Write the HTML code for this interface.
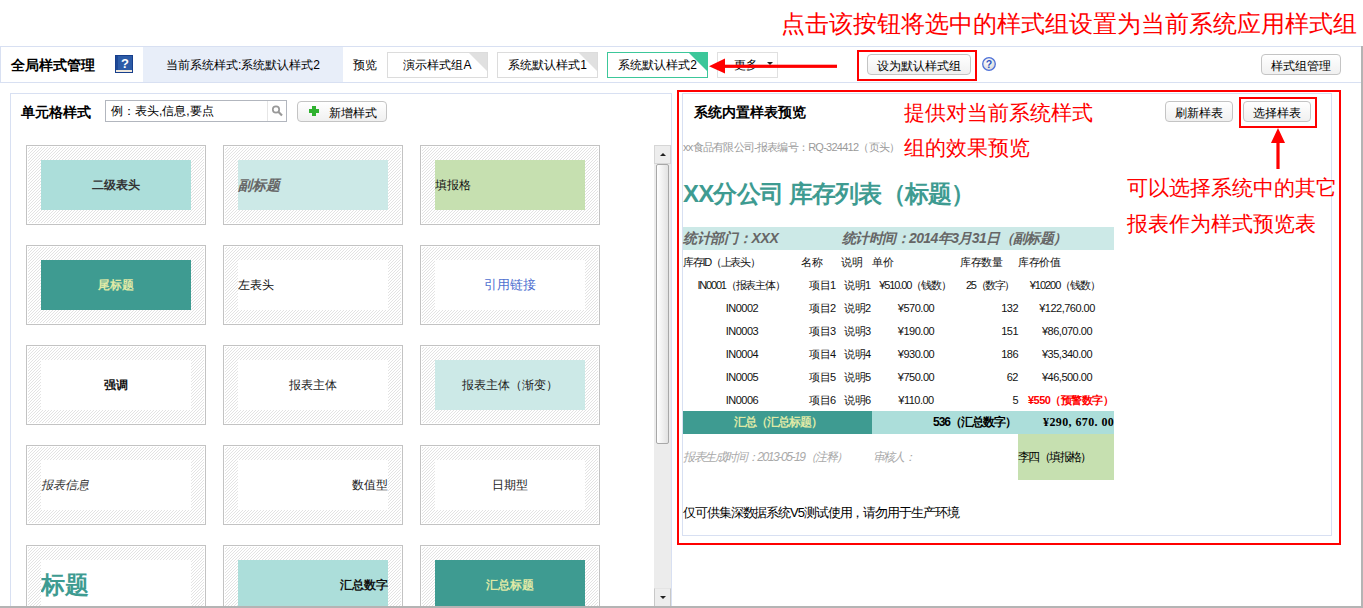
<!DOCTYPE html>
<html><head><meta charset="utf-8">
<style>
*{box-sizing:border-box;margin:0;padding:0}
html,body{width:1363px;height:608px;overflow:hidden;background:#fff}
body{position:relative;font-family:"Liberation Sans",sans-serif;font-size:12px;color:#000}
.a{position:absolute;white-space:nowrap}
.red{color:#ff0000}
.btn{position:absolute;border:1px solid #c4c4c4;border-radius:4px;background:linear-gradient(#ffffff,#f0f0f0);font-size:12px;text-align:center;white-space:nowrap}
.tab{position:absolute;top:52px;height:26px;border:1px solid #dcdcdc;background:#fff;font-size:12px;text-align:center;line-height:24px;white-space:nowrap;overflow:hidden}
.tab i{position:absolute;right:0;top:0;width:0;height:0;border-top:18px solid #e0e0e0;border-left:18px solid transparent}
.tile{position:absolute;width:180px;height:80px;border:1px solid #c3c3c3;}
.tin{width:150px;height:50px;line-height:50px;font-size:12px;overflow:hidden}
.td{font-size:11px;line-height:14px;letter-spacing:-0.5px;color:#111}
.in{position:absolute;left:14px;top:14px;width:150px;height:50px;line-height:50px;font-size:12px;white-space:nowrap;overflow:hidden}
</style></head>
<body>

<!-- top annotation -->
<div class="a red" style="left:781px;top:10px;font-size:24px;line-height:28px">点击该按钮将选中的样式组设置为当前系统应用样式组</div>

<!-- toolbar -->
<div class="a" style="left:0;top:46px;width:1362px;height:37px;border:1px solid #d8e0f2;border-right:none"></div>
<div class="a" style="left:143px;top:47px;width:200px;height:35px;background:#e8eef9"></div>
<div class="a" style="left:11px;top:57px;font-size:14px;font-weight:bold;line-height:16px">全局样式管理</div>
<svg class="a" style="left:115px;top:55px" width="18" height="18" viewBox="0 0 18 18" shape-rendering="crispEdges">
  <rect x="0" y="0" width="18" height="18" fill="#173f8c"/>
  <rect x="1" y="1" width="2" height="14" fill="#1d4896"/>
  <rect x="3" y="1" width="14" height="14" fill="#2c5ba7"/>
  <rect x="1" y="15" width="16" height="2" fill="#efe8dc"/>
  <text x="10" y="13" font-size="13" font-weight="bold" fill="#fff" text-anchor="middle" font-family="Liberation Sans" shape-rendering="auto">?</text>
</svg>
<div class="a" style="left:166px;top:58px;line-height:14px">当前系统样式:系统默认样式2</div>
<div class="a" style="left:353px;top:58px;line-height:14px">预览</div>
<div class="tab" style="left:387px;width:101px">演示样式组A<i></i></div>
<div class="tab" style="left:497px;width:101px">系统默认样式1<i></i></div>
<div class="tab" style="left:607px;width:101px;border-color:#3cc79a">系统默认样式2<i style="border-top-color:#3cc79a"></i></div>
<div class="tab" style="left:717px;width:61px;border-color:#e0e0e0;text-align:left;padding-left:16px">更多 <b style="position:absolute;left:49px;top:9px;width:0;height:0;border-left:3px solid transparent;border-right:3px solid transparent;border-top:3px solid #222"></b></div>
<!-- red arrow left -->
<svg class="a" style="left:705px;top:56px" width="135" height="20" viewBox="0 0 135 20">
  <rect x="14" y="8.7" width="118" height="3.2" fill="#ff0000"/>
  <polygon points="4,10.3 20,2.5 20,17.5" fill="#ff0000"/>
</svg>
<div class="a" style="left:857px;top:50px;width:120px;height:31px;border:2px solid #ff0000"></div>
<div class="btn" style="left:867px;top:54px;width:104px;height:21px;line-height:22px">设为默认样式组</div>
<svg class="a" style="left:982px;top:57px" width="14" height="14" viewBox="0 0 14 14">
  <defs><radialGradient id="cg" cx="0.4" cy="0.35" r="0.7"><stop offset="0" stop-color="#ffffff"/><stop offset="1" stop-color="#d6d6d6"/></radialGradient></defs>
  <circle cx="7" cy="7" r="6.3" fill="url(#cg)" stroke="#4d70d8" stroke-width="1.3"/>
  <text x="7" y="11" font-size="10.5" font-weight="bold" fill="#2f55c0" text-anchor="middle" font-family="Liberation Sans">?</text>
</svg>
<div class="btn" style="left:1261px;top:54px;width:80px;height:21px;line-height:22px">样式组管理</div>

<!-- window edges -->
<div class="a" style="left:1361px;top:46px;width:2px;height:562px;background:#b4b4b4;z-index:10"></div>
<div class="a" style="left:0;top:606px;width:1363px;height:2px;background:#b4b4b4;z-index:10"></div>

<!-- LEFT PANEL -->
<div class="a" style="left:10px;top:93px;width:662px;height:530px;border:1px solid #d8e0f2"></div>
<div class="a" style="left:21px;top:104px;font-size:14px;font-weight:bold;line-height:16px">单元格样式</div>
<div class="a" style="left:105px;top:100px;width:182px;height:22px;border:1px solid #b2b6be;background:#fff"></div>
<div class="a" style="left:267px;top:101px;width:1px;height:20px;background:#e6e6e6"></div>
<div class="a" style="left:111px;top:104px;line-height:14px">例：表头,信息,要点</div>
<svg class="a" style="left:271px;top:104px" width="14" height="14" viewBox="0 0 14 14">
  <circle cx="5" cy="5.5" r="3.2" fill="none" stroke="#999" stroke-width="1.7"/>
  <line x1="7.3" y1="7.8" x2="11" y2="11.5" stroke="#999" stroke-width="2.2"/>
</svg>
<div class="btn" style="left:297px;top:101px;width:90px;height:21px;line-height:22px;text-align:left;padding-left:31px">新增样式</div>
<svg class="a" style="left:309px;top:106px" width="10" height="10" viewBox="0 0 10 10">
  <path d="M3 0h4v3h3v4h-3v3h-4v-3h-3v-4h3z" fill="#2fb12f"/>
</svg>

<!-- TILES -->
<svg class="a" style="left:0;top:0" width="660" height="608" viewBox="0 0 660 608" shape-rendering="crispEdges">
<defs><pattern id="hp" width="3" height="3" patternUnits="userSpaceOnUse"><rect width="3" height="3" fill="#fff"/><rect x="0" y="2" width="1" height="1" fill="#e3e3e3"/><rect x="1" y="1" width="1" height="1" fill="#e3e3e3"/><rect x="2" y="0" width="1" height="1" fill="#e3e3e3"/></pattern></defs>
<rect x="26.5" y="145.5" width="179" height="79" fill="#fff" stroke="#c3c3c3"/>
<rect x="28" y="147" width="176" height="76" fill="url(#hp)"/>
<rect x="41" y="160" width="150" height="50" fill="#acdeda"/>
<rect x="223.5" y="145.5" width="179" height="79" fill="#fff" stroke="#c3c3c3"/>
<rect x="225" y="147" width="176" height="76" fill="url(#hp)"/>
<rect x="238" y="160" width="150" height="50" fill="#cce9e7"/>
<rect x="420.5" y="145.5" width="179" height="79" fill="#fff" stroke="#c3c3c3"/>
<rect x="422" y="147" width="176" height="76" fill="url(#hp)"/>
<rect x="435" y="160" width="150" height="50" fill="#c6e0b0"/>
<rect x="26.5" y="245.5" width="179" height="79" fill="#fff" stroke="#c3c3c3"/>
<rect x="28" y="247" width="176" height="76" fill="url(#hp)"/>
<rect x="41" y="260" width="150" height="50" fill="#3e9b91"/>
<rect x="223.5" y="245.5" width="179" height="79" fill="#fff" stroke="#c3c3c3"/>
<rect x="225" y="247" width="176" height="76" fill="url(#hp)"/>
<rect x="238" y="260" width="150" height="50" fill="#ffffff"/>
<rect x="420.5" y="245.5" width="179" height="79" fill="#fff" stroke="#c3c3c3"/>
<rect x="422" y="247" width="176" height="76" fill="url(#hp)"/>
<rect x="435" y="260" width="150" height="50" fill="#ffffff"/>
<rect x="26.5" y="345.5" width="179" height="79" fill="#fff" stroke="#c3c3c3"/>
<rect x="28" y="347" width="176" height="76" fill="url(#hp)"/>
<rect x="41" y="360" width="150" height="50" fill="#ffffff"/>
<rect x="223.5" y="345.5" width="179" height="79" fill="#fff" stroke="#c3c3c3"/>
<rect x="225" y="347" width="176" height="76" fill="url(#hp)"/>
<rect x="238" y="360" width="150" height="50" fill="#ffffff"/>
<rect x="420.5" y="345.5" width="179" height="79" fill="#fff" stroke="#c3c3c3"/>
<rect x="422" y="347" width="176" height="76" fill="url(#hp)"/>
<rect x="435" y="360" width="150" height="50" fill="#cce9e7"/>
<rect x="26.5" y="445.5" width="179" height="79" fill="#fff" stroke="#c3c3c3"/>
<rect x="28" y="447" width="176" height="76" fill="url(#hp)"/>
<rect x="41" y="460" width="150" height="50" fill="#ffffff"/>
<rect x="223.5" y="445.5" width="179" height="79" fill="#fff" stroke="#c3c3c3"/>
<rect x="225" y="447" width="176" height="76" fill="url(#hp)"/>
<rect x="238" y="460" width="150" height="50" fill="#ffffff"/>
<rect x="420.5" y="445.5" width="179" height="79" fill="#fff" stroke="#c3c3c3"/>
<rect x="422" y="447" width="176" height="76" fill="url(#hp)"/>
<rect x="435" y="460" width="150" height="50" fill="#ffffff"/>
<rect x="26.5" y="545.5" width="179" height="79" fill="#fff" stroke="#c3c3c3"/>
<rect x="28" y="547" width="176" height="76" fill="url(#hp)"/>
<rect x="41" y="560" width="150" height="50" fill="#ffffff"/>
<rect x="223.5" y="545.5" width="179" height="79" fill="#fff" stroke="#c3c3c3"/>
<rect x="225" y="547" width="176" height="76" fill="url(#hp)"/>
<rect x="238" y="560" width="150" height="50" fill="#acdeda"/>
<rect x="420.5" y="545.5" width="179" height="79" fill="#fff" stroke="#c3c3c3"/>
<rect x="422" y="547" width="176" height="76" fill="url(#hp)"/>
<rect x="435" y="560" width="150" height="50" fill="#3e9b91"/>
</svg>
<div class="a tin" style="left:41px;top:160px;font-weight:bold;text-align:center;color:#333">二级表头</div>
<div class="a tin" style="left:238px;top:160px;font-style:italic;font-weight:bold;font-size:14px;text-align:left;color:#666">副标题</div>
<div class="a tin" style="left:435px;top:160px;text-align:left;color:#111">填报格</div>
<div class="a tin" style="left:41px;top:260px;font-weight:bold;text-align:center;color:#dfe9a6">尾标题</div>
<div class="a tin" style="left:238px;top:260px;text-align:left;color:#111">左表头</div>
<div class="a tin" style="left:435px;top:260px;text-align:center;color:#4e6fcf;font-size:13px">引用链接</div>
<div class="a tin" style="left:41px;top:360px;font-weight:bold;text-align:center;color:#111">强调</div>
<div class="a tin" style="left:238px;top:360px;text-align:center;color:#222">报表主体</div>
<div class="a tin" style="left:435px;top:360px;text-align:center;color:#222">报表主体（渐变）</div>
<div class="a tin" style="left:41px;top:460px;font-style:italic;text-align:left;color:#333">报表信息</div>
<div class="a tin" style="left:238px;top:460px;text-align:right;color:#222">数值型</div>
<div class="a tin" style="left:435px;top:460px;text-align:center;color:#222">日期型</div>
<div class="a tin" style="left:41px;top:560px;font-weight:900;font-size:24px;text-align:left;color:#3e9b91">标题</div>
<div class="a tin" style="left:238px;top:560px;font-weight:bold;text-align:right;color:#111">汇总数字</div>
<div class="a tin" style="left:435px;top:560px;font-weight:bold;text-align:center;color:#dfe9a6">汇总标题</div>

<!-- scrollbar -->
<div class="a" style="left:654px;top:145px;width:17px;height:461px;background:#ececec"></div>
<div class="a" style="left:654px;top:145px;width:17px;height:19px;border:1px solid #d6d6d6;background:#ededed"></div>
<div class="a" style="left:660px;top:153px;width:0;height:0;border-left:3px solid transparent;border-right:3px solid transparent;border-bottom:3px solid #222"></div>
<div class="a" style="left:656px;top:164px;width:13px;height:280px;border:1px solid #a8a8a8;border-radius:2px;background:linear-gradient(90deg,#ffffff,#e2e2e2)"></div>
<div class="a" style="left:654px;top:588px;width:17px;height:18px;border:1px solid #c8c8c8;border-top-color:#e4e4e4;border-bottom:none;background:#ededed"></div>
<div class="a" style="left:660px;top:596px;width:0;height:0;border-left:3px solid transparent;border-right:3px solid transparent;border-top:3px solid #222"></div>

<!-- RIGHT PANEL -->
<div class="a" style="left:677px;top:90px;width:664px;height:455px;border:2px solid #ff0000"></div>
<div class="a" style="left:682px;top:93px;width:650px;height:443px;border:1px solid #d8e0f2"></div>


<div class="a" style="left:694px;top:104px;font-size:14px;font-weight:bold;line-height:16px">系统内置样表预览</div>
<div class="btn" style="left:1165px;top:101px;width:68px;height:21px;line-height:22px">刷新样表</div>
<div class="btn" style="left:1243px;top:101px;width:68px;height:21px;line-height:22px">选择样表</div>
<div class="a" style="left:1239px;top:97px;width:78px;height:31px;border:2px solid #ff0000"></div>
<svg class="a" style="left:1268px;top:127px" width="20" height="44" viewBox="0 0 20 44">
  <rect x="8.4" y="12" width="3.2" height="30" fill="#ff0000"/>
  <polygon points="10,1 3,16 17,16" fill="#ff0000"/>
</svg>
<div class="a red" style="left:904px;top:100px;font-size:21px;line-height:26px">提供对当前系统样式</div>
<div class="a red" style="left:904px;top:135px;font-size:21px;line-height:26px">组的效果预览</div>
<div class="a red" style="left:1127px;top:175px;font-size:21px;line-height:26px">可以选择系统中的其它</div>
<div class="a red" style="left:1127px;top:211px;font-size:21px;line-height:26px">报表作为样式预览表</div>

<div class="a" style="left:683px;top:140px;font-size:11px;line-height:14px;color:#9a9a9a;letter-spacing:-0.75px">xx食品有限公司-报表编号：RQ-324412（页头）</div>
<div class="a" style="left:683px;top:180px;font-size:24px;font-weight:900;line-height:28px;color:#3e9b91;letter-spacing:-0.8px">XX分公司 库存列表（标题）</div>

<div class="a" style="left:683px;top:227px;width:431px;height:23px;background:#cce9e7"></div>
<div class="a" style="left:683px;top:230px;font-size:14px;font-style:italic;font-weight:bold;line-height:17px;color:#666;letter-spacing:-0.3px">统计部门：XXX</div>
<div class="a" style="left:842px;top:230px;font-size:14px;font-style:italic;font-weight:bold;line-height:17px;color:#666;letter-spacing:-0.6px">统计时间：2014年3月31日（副标题）</div>

<div class="a td" style="left:683px;top:255px;letter-spacing:-1.3px">库存ID（上表头）</div>
<div class="a td" style="left:801px;top:255px;">名称</div>
<div class="a td" style="left:841px;top:255px;">说明</div>
<div class="a td" style="left:872px;top:255px;">单价</div>
<div class="a td" style="left:960px;top:255px;">库存数量</div>
<div class="a td" style="left:1018px;top:255px;">库存价值</div>
<div class="a td" style="left:681px;top:278px;width:120px;text-align:center;letter-spacing:-1.2px">IN0001（报表主体）</div>
<div class="a td" style="left:809px;top:278px;">项目1</div>
<div class="a td" style="left:844px;top:278px;">说明1</div>
<div class="a td" style="left:870px;top:278px;width:90px;text-align:center;letter-spacing:-1.1px">¥510.00（钱数）</div>
<div class="a td" style="left:960px;top:278px;width:60px;text-align:center;letter-spacing:-1.4px">25（数字）</div>
<div class="a td" style="left:1020px;top:278px;width:90px;text-align:center;letter-spacing:-1px">¥10200（钱数）</div>
<div class="a td" style="left:702px;top:301px;width:80px;text-align:center;">IN0002</div>
<div class="a td" style="left:809px;top:301px;">项目2</div>
<div class="a td" style="left:844px;top:301px;">说明2</div>
<div class="a td" style="left:876px;top:301px;width:80px;text-align:center;">¥570.00</div>
<div class="a td" style="left:958px;top:301px;width:60px;text-align:right;">132</div>
<div class="a td" style="left:1022px;top:301px;width:90px;text-align:center;">¥122,760.00</div>
<div class="a td" style="left:702px;top:324px;width:80px;text-align:center;">IN0003</div>
<div class="a td" style="left:809px;top:324px;">项目3</div>
<div class="a td" style="left:844px;top:324px;">说明3</div>
<div class="a td" style="left:876px;top:324px;width:80px;text-align:center;">¥190.00</div>
<div class="a td" style="left:958px;top:324px;width:60px;text-align:right;">151</div>
<div class="a td" style="left:1022px;top:324px;width:90px;text-align:center;">¥86,070.00</div>
<div class="a td" style="left:702px;top:347px;width:80px;text-align:center;">IN0004</div>
<div class="a td" style="left:809px;top:347px;">项目4</div>
<div class="a td" style="left:844px;top:347px;">说明4</div>
<div class="a td" style="left:876px;top:347px;width:80px;text-align:center;">¥930.00</div>
<div class="a td" style="left:958px;top:347px;width:60px;text-align:right;">186</div>
<div class="a td" style="left:1022px;top:347px;width:90px;text-align:center;">¥35,340.00</div>
<div class="a td" style="left:702px;top:370px;width:80px;text-align:center;">IN0005</div>
<div class="a td" style="left:809px;top:370px;">项目5</div>
<div class="a td" style="left:844px;top:370px;">说明5</div>
<div class="a td" style="left:876px;top:370px;width:80px;text-align:center;">¥750.00</div>
<div class="a td" style="left:958px;top:370px;width:60px;text-align:right;">62</div>
<div class="a td" style="left:1022px;top:370px;width:90px;text-align:center;">¥46,500.00</div>
<div class="a td" style="left:702px;top:393px;width:80px;text-align:center;">IN0006</div>
<div class="a td" style="left:809px;top:393px;">项目6</div>
<div class="a td" style="left:844px;top:393px;">说明6</div>
<div class="a td" style="left:876px;top:393px;width:80px;text-align:center;">¥110.00</div>
<div class="a td" style="left:958px;top:393px;width:60px;text-align:right;">5</div>
<div class="a td" style="left:1028px;top:393px;color:#f00;font-weight:bold">¥550（预警数字）</div>

<div class="a" style="left:683px;top:411px;width:189px;height:23px;background:#3e9b91"></div>
<div class="a" style="left:872px;top:411px;width:242px;height:23px;background:#acdeda"></div>
<div class="a" style="left:683px;top:414px;width:189px;text-align:center;font-size:12px;font-weight:bold;line-height:17px;color:#dfe9a6;letter-spacing:-1px">汇总（汇总标题）</div>
<div class="a" style="left:933px;top:414px;font-size:12px;font-weight:bold;line-height:17px;letter-spacing:-1px">536（汇总数字）</div>
<div class="a" style="left:1043px;top:414px;font-size:12px;font-weight:bold;line-height:17px;font-family:'Liberation Serif',serif;letter-spacing:0.4px">¥290, 670. 00</div>

<div class="a" style="left:1018px;top:434px;width:96px;height:46px;background:#c6e0b0"></div>
<div class="a" style="left:1018px;top:450px;font-size:12px;line-height:14px;letter-spacing:-1.6px">李四（填报格）</div>
<div class="a" style="left:683px;top:450px;font-size:12px;font-style:italic;line-height:14px;color:#aaa;letter-spacing:-1.4px">报表生成时间：2013-05-19（注释）</div>
<div class="a" style="left:873px;top:450px;font-size:12px;font-style:italic;line-height:14px;color:#aaa;letter-spacing:-1.8px">审核人：</div>

<div class="a" style="left:683px;top:505px;font-size:13px;line-height:15px;letter-spacing:-1.1px">仅可供集深数据系统V5测试使用，请勿用于生产环境</div>

</body></html>
